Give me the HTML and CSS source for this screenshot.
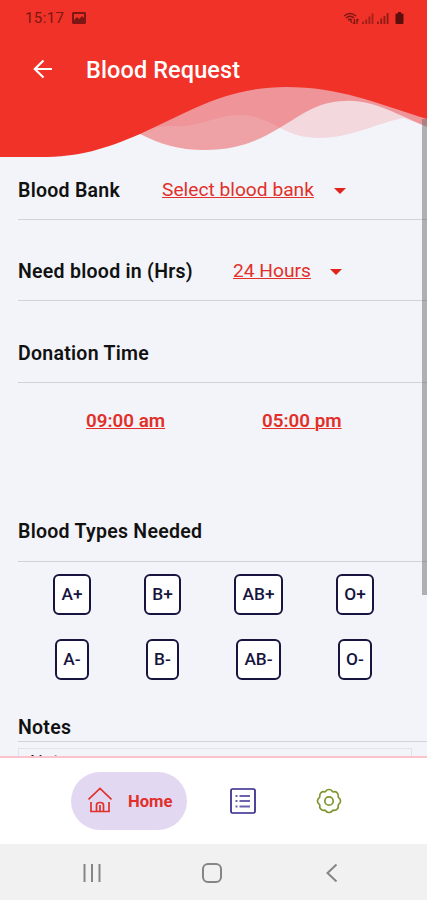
FILE: index.html
```html
<!DOCTYPE html>
<html lang="en">
<head>
  <meta charset="UTF-8">
  <meta name="viewport" content="width=device-width, initial-scale=1.0">
  <title>Blood Request</title>
  <link rel="stylesheet" href="styles.css">
</head>
<body>
  <div class="screen">
    <header class="header">
      <svg class="waves" viewBox="0 0 427 158">
        <path fill="#f3d8de" d="M140 134C160 123 172 127 185 126C205 124 218 115 241 115C273 116 282 138 319 138C350 138 375 124 403 118L427 126V0H140Z"/>
        <path fill="#ec5054" fill-opacity=".5" d="M140 134C160 144 178 150 205 150C278 150 295 101 345 101C372 99 398 115 427 127V0H140Z"/>
        <path fill="#f03228" d="M0 157H40C80 157 105 149 140 134C185 114 225 87 286 87C340 87 375 103 427 119V0H0Z"/>
      </svg>
      <div class="header-content">
        <div class="status-bar">
          <span class="clock">15:17</span>
          <svg class="photo-icon" viewBox="0 0 14 12">
            <path fill="currentColor" fill-rule="evenodd" d="M1 0H13L14 1V11L13 12H1L0 11V1ZM2 2V8L5 5L7 7L10 4L12 6V2Z"/>
          </svg>
          <div class="status-icons">
            <svg width="16" height="13" viewBox="0 0 16 13" fill="none" stroke="currentColor" stroke-width="1.3">
              <path d="M1 4Q7 -1 13 4M3 6Q7 2.5 11 6M5 8Q7 6.500 9 8M7 8.500L9 10.500M11.500 7V12M10 10.500L11.500 12M14 12V7M14 7L15.500 8.500"/>
            </svg>
            <svg width="12" height="12" viewBox="0 0 12 12" fill="currentColor" opacity=".65">
              <path d="M0 9.500H2V12H0ZM3.200 7.500H5.200V12H3.200ZM6.400 4.500H8.400V12H6.400ZM9.600 1.500H11.400V12H9.600Z"/>
            </svg>
            <svg width="12" height="12" viewBox="0 0 12 12" fill="currentColor">
              <path d="M0 9.500H1.800V12H0ZM3.300 6.500H5.100V12H3.300ZM6.500 4H8.300V12H6.500ZM9.700 1H11.500V12H9.700Z" opacity=".85"/>
            </svg>
            <svg class="battery" width="9" height="12" viewBox="0 0 9 12" fill="currentColor">
              <path d="M3 0H6V1.500H7.500Q8.500 1.500 8.500 2.500V11Q8.500 12 7.500 12H1.500Q.5 12 .5 11V2.500Q.5 1.500 1.500 1.500H3Z"/>
            </svg>
          </div>
        </div>
        <div class="title-bar">
          <svg class="back" viewBox="0 0 20 20">
            <path d="M19 10H2M10.500 1.500L1.800 10L10.500 18.500"/>
          </svg>
          <h1>Blood Request</h1>
        </div>
      </div>
    </header>

    <main class="form">
      <div class="row row-bank">
        <h2>Blood Bank</h2>
        <a class="select">Select blood bank</a>
        <span class="caret"></span>
      </div>
      <div class="row row-hours">
        <h2>Need blood in (Hrs)</h2>
        <a class="select">24 Hours</a>
        <span class="caret"></span>
      </div>
      <div class="row row-time">
        <h2>Donation Time</h2>
      </div>
      <div class="times">
        <a>09:00 am</a>
        <a>05:00 pm</a>
      </div>
      <div class="row row-types">
        <h2>Blood Types Needed</h2>
      </div>
      <div class="types">
        <button class="type">A+</button>
        <button class="type">B+</button>
        <button class="type">AB+</button>
        <button class="type">O+</button>
        <button class="type">A-</button>
        <button class="type">B-</button>
        <button class="type">AB-</button>
        <button class="type">O-</button>
      </div>
      <div class="row row-notes">
        <h2>Notes</h2>
      </div>
      <div class="notes-box">Notes</div>
    </main>

    <nav class="tabs">
      <a class="tab-home">
        <svg width="24" height="26" viewBox="0 0 24 26">
          <path d="M.5 12.500L12 1.500L23.500 12.500M3 15V24.500H21V15M8.500 24V18Q8.500 15.500 12 15.500T15.500 18V24M12 18V24"/>
        </svg>
        <span>Home</span>
      </a>
      <svg class="tab-list" width="26" height="26" viewBox="0 0 26 26">
        <rect x="1" y="1" width="24" height="24" rx="1.500"/>
        <path class="lines" d="M5.500 8H7.500M9.500 8H20M5.500 13H7.500M9.500 13H20M5.500 18.500H7.500M9.500 18.500H20"/>
      </svg>
      <svg class="tab-settings" width="26" height="26" viewBox="0 0 26 26">
        <path d="M9.700 3.300A3.900 3.900 0 0 1 16.300 3.300A1.700 1.700 0 0 0 17.500 3.800A3.900 3.900 0 0 1 22.200 8.500A1.700 1.700 0 0 0 22.700 9.700A3.900 3.900 0 0 1 22.700 16.300A1.700 1.700 0 0 0 22.200 17.500A3.900 3.900 0 0 1 17.500 22.200A1.700 1.700 0 0 0 16.300 22.700A3.900 3.900 0 0 1 9.700 22.700A1.700 1.700 0 0 0 8.500 22.200A3.900 3.900 0 0 1 3.800 17.500A1.700 1.700 0 0 0 3.300 16.300A3.900 3.900 0 0 1 3.300 9.700A1.700 1.700 0 0 0 3.800 8.500A3.900 3.900 0 0 1 8.500 3.800A1.700 1.700 0 0 0 9.700 3.300Z"/>
        <circle cx="13" cy="13" r="4.200"/>
      </svg>
    </nav>

    <div class="android-nav">
      <svg width="18" height="18" viewBox="0 0 18 18"><path d="M1.500 0V18M9 0V18M16.500 0V18"/></svg>
      <svg width="20" height="20" viewBox="0 0 20 20"><rect x="1" y="1" width="18" height="18" rx="5"/></svg>
      <svg width="12" height="18" viewBox="0 0 12 18"><path d="M10.500 .5L1.500 9L10.500 17.500"/></svg>
    </div>

    <div class="scrollbar"></div>
  </div>
</body>
</html>
```
FILE: styles.css
```css
:root {
  --link: #e1302a;
  --navy: #17153f;
  --page: #f3f4f9;
}

* {
  box-sizing: border-box;
  margin: 0;
  padding: 0;
}

body {
  font-family: Roboto, sans-serif;
  background: var(--page);
}

svg {
  display: block;
  flex: none;
}

.screen {
  position: relative;
  width: 427px;
  height: 900px;
  display: flex;
  flex-direction: column;
  overflow: hidden;
}

/* header */
.header {
  display: grid;
  height: 158px;
  flex: none;
}

.waves,
.header-content {
  grid-area: 1 / 1;
}

.waves {
  width: 427px;
  height: 158px;
}

.status-bar {
  display: flex;
  align-items: center;
  height: 36px;
  padding: 0 23px 0 25px;
  color: #7d1713;
}

.clock {
  width: 47px;
  font-size: 15px;
  letter-spacing: 0.4px;
}

.photo-icon {
  width: 14px;
  height: 12px;
}

.status-icons {
  display: flex;
  align-items: center;
  gap: 3px;
  margin-left: auto;
}

.battery {
  margin-left: 3px;
  color: #5a0f0c;
}

.title-bar {
  display: flex;
  align-items: center;
  height: 67px;
  padding-left: 33px;
  color: #fff;
}

.back {
  width: 20px;
  height: 20px;
  margin: -2px 33px 0 0;
  fill: none;
  stroke: #fff;
  stroke-width: 2.2;
}

h1 {
  font-size: 23.5px;
  font-weight: 500;
  letter-spacing: 0.1px;
}

/* form */
.form {
  flex: none;
  height: 598px;
  padding-left: 18px;
  overflow: hidden;
}

.row {
  display: flex;
  align-items: center;
  border-bottom: 1px solid #d2d3d8;
}

h2 {
  font-size: 19.5px;
  font-weight: 600;
  letter-spacing: 0.27px;
  color: #111;
  white-space: nowrap;
}

.select {
  font-size: 19.2px;
  color: var(--link);
  text-decoration: underline;
  text-decoration-thickness: 1px;
  white-space: nowrap;
  padding-bottom: 3px;
}

.caret {
  border: 6px solid transparent;
  border-top-color: #e0241c;
  border-bottom: 0;
  margin-left: 20px;
}

.row-bank {
  height: 62px;
  padding-top: 4px;
}

.row-bank h2 {
  width: 144px;
}

.row-hours {
  height: 81px;
  padding-top: 23px;
}

.row-hours h2 {
  width: 215px;
}

.row-time {
  height: 82px;
  padding-top: 23px;
}

.times {
  display: flex;
  height: 118px;
  padding: 27px 0 0 68px;
}

.times a {
  flex: none;
  width: 176px;
  font-size: 18.8px;
  font-weight: 600;
  color: var(--link);
  text-decoration: underline;
  text-decoration-thickness: 1px;
}

.row-types {
  height: 61px;
  padding-top: 1px;
}

.types {
  display: grid;
  grid-template-columns: 90px 91px 101px 92px;
  grid-auto-rows: 41px;
  row-gap: 24px;
  justify-items: center;
  height: 148px;
  padding: 12px 0 0 9px;
}

.type {
  height: 41px;
  padding: 0 6.5px 1px;
  border: 2px solid var(--navy);
  border-radius: 6px;
  background: #fff;
  color: var(--navy);
  font-family: inherit;
  font-size: 17.3px;
  font-weight: 500;
}

.row-notes {
  height: 32px;
  padding-top: 4px;
}

.row-hours .caret {
  margin-left: 19px;
}

.notes-box {
  width: 394px;
  height: 40px;
  margin-top: 6px;
  padding: 2px 11px;
  border: 1px solid #e2e3e8;
  font-size: 18px;
  color: #222;
}

/* bottom bar */
.tabs {
  display: flex;
  align-items: center;
  flex: none;
  height: 88px;
  padding-left: 71px;
  border-top: 2px solid #fbc3cc;
  background: #fff;
}

.tabs svg {
  fill: none;
  stroke-width: 1.7;
}

.tab-home {
  display: flex;
  align-items: center;
  gap: 16px;
  width: 116px;
  height: 58px;
  padding-left: 17px;
  border-radius: 29px;
  background: #e2d8f2;
  color: var(--link);
  font-size: 16.6px;
  font-weight: 700;
}

.tab-home svg {
  margin-top: -2px;
  stroke: var(--link);
}

.tab-list {
  margin: -1px 0 0 43px;
  stroke: #30268a;
}

.tab-list .lines {
  stroke: #6a62ab;
  stroke-width: 2.2;
}

.tab-settings {
  margin: -1px 0 0 60px;
  stroke: #7f962f;
}

.android-nav {
  display: flex;
  align-items: center;
  flex: 1;
  padding: 1px 0 0 83px;
  background: #f1f1f1;
}

.android-nav svg {
  fill: none;
  stroke: #858585;
  stroke-width: 2;
}

.android-nav svg + svg {
  margin-left: 101px;
}

.android-nav svg:last-child {
  margin-left: 104px;
}

.scrollbar {
  position: absolute;
  top: 119px;
  right: 0;
  width: 5px;
  height: 476px;
  background: rgba(100, 102, 104, 0.48);
}
```
